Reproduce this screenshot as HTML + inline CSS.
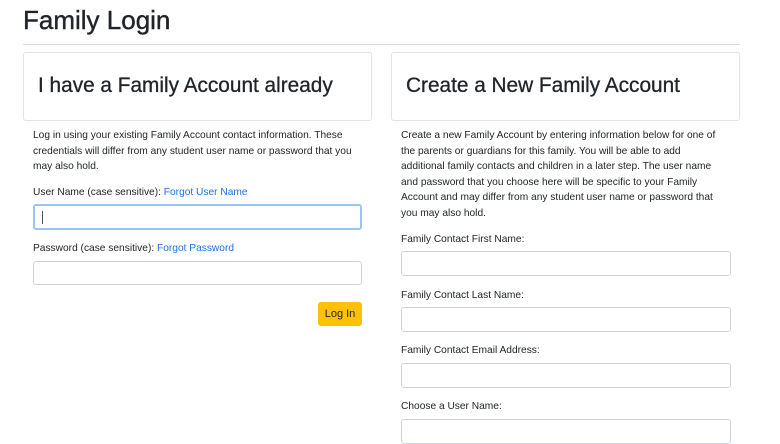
<!DOCTYPE html><html><head><style>
body{margin:0;width:780px;height:441px;overflow:hidden;background:#fff;font-family:"Liberation Sans",sans-serif;color:#212529;position:relative}
.a{position:absolute}
h1{position:absolute;left:23px;top:5px;margin:0;font-size:26px;font-weight:500;-webkit-text-stroke:0.4px #212529}
.hr{position:absolute;left:23px;top:44px;width:717px;height:1px;background:#ddd}
.card{position:absolute;top:52px;height:69px;border:1px solid #e3e3e3;border-radius:3px;box-sizing:border-box}
.card span{position:absolute;left:14px;top:21px;font-size:20.8px;white-space:nowrap;-webkit-text-stroke:0.3px #212529}
.t{position:absolute;font-size:10.2px;line-height:15.6px;white-space:nowrap}
.in{position:absolute;height:24px;border:1px solid #ced4da;border-radius:3px;box-sizing:border-box}
a{color:#1a73e8;text-decoration:none}
</style></head><body>
<h1>Family Login</h1><div class="hr"></div>
<div class="card" style="left:23px;width:349px"><span>I have a Family Account already</span></div>
<div class="card" style="left:391px;width:349px"><span>Create a New Family Account</span></div>
<div class="t" style="left:33px;top:128px">Log in using your existing Family Account contact information. These<br>credentials will differ from any student user name or password that you<br>may also hold.</div>
<div class="t" style="left:33px;top:185px">User Name (case sensitive): <a>Forgot User Name</a></div>
<div class="in" style="left:33px;top:204px;width:329px;height:26px;border:2px solid #9cc3f5"><div style="position:absolute;left:7px;top:5px;width:1px;height:13px;background:#555"></div></div>
<div class="t" style="left:33px;top:241px">Password (case sensitive): <a>Forgot Password</a></div>
<div class="in" style="left:33px;top:261px;width:329px"></div>
<div class="a" style="left:318px;top:302px;width:44px;height:24px;background:#ffc107;border-radius:3px;font-size:11px;line-height:24px;text-align:center">Log In</div>
<div class="t" style="left:401px;top:128px">Create a new Family Account by entering information below for one of<br>the parents or guardians for this family. You will be able to add<br>additional family contacts and children in a later step. The user name<br>and password that you choose here will be specific to your Family<br>Account and may differ from any student user name or password that<br>you may also hold.</div>
<div class="t" style="left:401px;top:232px">Family Contact First Name:</div>
<div class="in" style="left:401px;top:251px;width:330px;height:25px"></div>
<div class="t" style="left:401px;top:288px">Family Contact Last Name:</div>
<div class="in" style="left:401px;top:307px;width:330px;height:25px"></div>
<div class="t" style="left:401px;top:343px">Family Contact Email Address:</div>
<div class="in" style="left:401px;top:363px;width:330px;height:25px"></div>
<div class="t" style="left:401px;top:399px">Choose a User Name:</div>
<div class="in" style="left:401px;top:419px;width:330px;height:25px"></div>
</body></html>
